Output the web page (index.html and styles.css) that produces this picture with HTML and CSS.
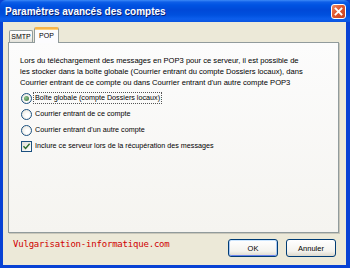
FILE: index.html
```html
<!DOCTYPE html>
<html lang="fr">
<head>
<meta charset="utf-8">
<title>Paramètres avancés des comptes</title>
<link rel="stylesheet" href="styles.css">
</head>
<body>
<div class="window">
  <div class="titlebar">
    <span class="title">Paramètres avancés des comptes</span>
    <span class="close">
      <svg width="13" height="13" viewBox="0 0 13 13"><path d="M3.5 3.5 L9.5 9.5 M9.5 3.5 L3.5 9.5" stroke="#fff" stroke-width="1.8" stroke-linecap="square"/></svg>
    </span>
  </div>
  <div class="frame">
    <div class="tabs">
      <div class="tab">SMTP</div>
      <div class="tab active">POP</div>
    </div>
    <div class="panel">
      <p class="intro">Lors du téléchargement des messages en POP3 pour ce serveur, il est possible de<br>les stocker dans la boîte globale (Courrier entrant du compte Dossiers locaux), dans<br>Courrier entrant de ce compte ou dans Courrier entrant d'un autre compte POP3</p>
      <div class="options">
        <div class="option"><span class="radio checked"></span><span class="label focus">Boîte globale (compte Dossiers locaux)</span></div>
        <div class="option"><span class="radio"></span><span class="label">Courrier entrant de ce compte</span></div>
        <div class="option"><span class="radio"></span><span class="label">Courrier entrant d'un autre compte</span></div>
        <div class="option"><span class="check"><svg width="9" height="9" viewBox="0 0 9 9"><path d="M1.5 4.2 L3.6 6.4 L7.6 1.8" fill="none" stroke="#2b6a2b" stroke-width="1.4"/></svg></span><span class="label">Inclure ce serveur lors de la récupération des messages</span></div>
      </div>
    </div>
    <div class="footer">
      <span class="brand">Vulgarisation-informatique.com</span>
      <div class="buttons">
        <button class="btn default">OK</button>
        <button class="btn">Annuler</button>
      </div>
    </div>
  </div>
</div>
</body>
</html>
```

FILE: styles.css
```css
* { box-sizing: border-box; }
html, body { margin: 0; padding: 0; }
body { width: 350px; height: 268px; overflow: hidden; background: #0842d4; font-family: "Liberation Sans", Arial, sans-serif; }

.window { width: 350px; height: 268px; display: flex; flex-direction: column; }

.titlebar {
  height: 22px;
  flex: none;
  display: flex;
  align-items: center;
  justify-content: space-between;
  padding: 0 4px 0 5px;
  border-radius: 6px 6px 0 0;
  background: linear-gradient(to bottom, #3d8af7 0, #0f5fe8 2px, #0053e2 5px, #0049d8 10px, #0050de 15px, #0c5eec 19px, #0a54e0 22px);
}
.title { color: #fff; font-weight: bold; font-size: 10px; letter-spacing: 0; text-shadow: 1px 1px 0 #0a1f6e; margin-top: 1px; }
.close {
  width: 15px; height: 15px;
  display: flex; align-items: center; justify-content: center;
  border: 1px solid #fff;
  border-radius: 3px;
  background: linear-gradient(135deg, #f08a64 0, #e0572f 45%, #c5401f 100%);
  margin-top: 1px;
}
.close svg { display: block; }

.frame {
  flex: 1;
  display: flex;
  flex-direction: column;
  background: #ece9d8;
  border-left: 3px solid #0842d4;
  border-right: 4px solid #0842d4;
  border-bottom: 3px solid #0842d4;
  padding: 5px 7px 0 5px;
}

.tabs { height: 15px; display: flex; align-items: flex-end; padding-left: 1px; }
.tab {
  width: 24px; height: 12px;
  margin-right: 1px;
  border: 1px solid #919b9c;
  border-bottom: none;
  border-radius: 2px 2px 0 0;
  background: linear-gradient(#ffffff, #f3f3ef 60%, #e3e2da);
  font-size: 7px;
  line-height: 11px;
  text-align: center;
  color: #000;
}
.tab.active {
  width: 25px; height: 16px;
  margin-bottom: -1px;
  position: relative; z-index: 1;
  border-top: 2px solid #f7b54a;
  background: #fcfcfe;
  line-height: 13px;
  box-shadow: inset 0 1px 0 #ffd27a;
}

.panel {
  height: 191px;
  flex: none;
  background: linear-gradient(#fcfcfc, #f5f4f0);
  border: 1px solid #919b9c;
  box-shadow: 1px 1px 0 #c9c7ba;
  padding: 12px 11px 0 11px;
  font-size: 7.6px;
  color: #000;
}
.intro { margin: 0; line-height: 11px; white-space: nowrap; }

.options { margin-top: 2px; display: flex; flex-direction: column; font-size: 7.2px; }
.option { height: 16px; display: flex; align-items: center; }
.radio {
  width: 11px; height: 11px;
  margin-left: 1px;
  border: 1px solid #1c5180;
  border-radius: 50%;
  background: radial-gradient(circle at 60% 60%, #fff 20%, #e6e4da 90%);
  display: flex; align-items: center; justify-content: center;
}
.radio.checked::after {
  content: "";
  width: 5px; height: 5px; border-radius: 50%;
  background: radial-gradient(circle at 35% 35%, #8ec78e, #3a6a3a);
}
.check {
  width: 11px; height: 11px;
  margin-left: 1px;
  border: 1px solid #1c5180;
  background: linear-gradient(135deg, #e0ded4, #fff);
  display: flex; align-items: center; justify-content: center;
}
.check svg { display: block; }
.label { margin-left: 1px; padding: 0 1px; border: 1px dotted transparent; line-height: 10px; }
.label.focus { border-color: #555; }

.footer { display: flex; justify-content: space-between; align-items: flex-start; margin-top: 5px; }
.brand {
  margin-left: 5px; margin-top: 1px;
  font-family: "DejaVu Sans Mono", monospace;
  font-size: 9px;
  letter-spacing: -0.2px;
  color: #d00000;
  line-height: 10px;
}
.buttons { display: flex; gap: 8px; margin-right: 3px; margin-top: 1px; }
.btn {
  width: 50px; height: 18px;
  padding: 0;
  border: 1px solid #003c74;
  border-radius: 3px;
  background: linear-gradient(#ffffff, #f4f3ee 70%, #dcd8cc);
  font-family: "Liberation Sans", Arial, sans-serif;
  font-size: 7.5px;
  color: #000;
}
.btn.default { box-shadow: inset 0 1px 0 #cee7ff, inset 1px 0 0 #a8c8f5, inset -1px 0 0 #a8c8f5, inset 0 -1px 0 #6982ee; }
```
